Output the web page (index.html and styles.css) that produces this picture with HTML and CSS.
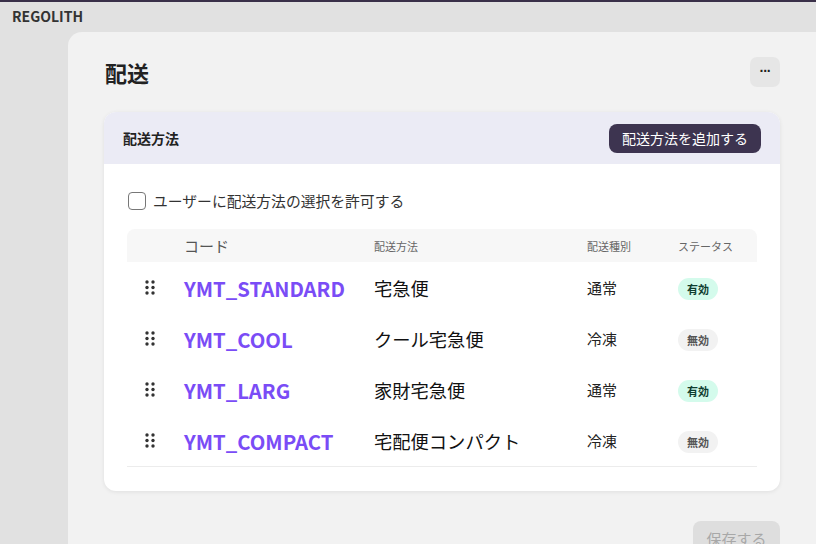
FILE: index.html
```html
<!DOCTYPE html>
<html lang="ja">
<head>
    <meta charset="UTF-8">
    <meta name="viewport" content="width=device-width, initial-scale=1.0">
    <title>配送 - REGOLITH</title>
    <link rel="stylesheet" href="styles.css">
</head>
<body>
    <header class="topbar">REGOLITH</header>

    <div class="layout">
        <aside class="sidebar"></aside>

        <main class="main">
            <div class="page-head">
                <h1>配送</h1>
                <button class="more-btn" type="button">&middot;&middot;&middot;</button>
            </div>

            <section class="card">
                <div class="card-header">
                    <h2>配送方法</h2>
                    <button class="primary-btn" type="button">配送方法を追加する</button>
                </div>

                <div class="card-body">
                    <label class="check">
                        <input type="checkbox">
                        <span>ユーザーに配送方法の選択を許可する</span>
                    </label>

                    <div class="table">
                        <div class="row head">
                            <div></div>
                            <div class="col-code">コード</div>
                            <div>配送方法</div>
                            <div>配送種別</div>
                            <div>ステータス</div>
                        </div>

                        <div class="row">
                            <div class="handle"><svg width="10" height="15" viewBox="0 0 10 15"><circle cx="2" cy="2" r="1.7"/><circle cx="8" cy="2" r="1.7"/><circle cx="2" cy="7.5" r="1.7"/><circle cx="8" cy="7.5" r="1.7"/><circle cx="2" cy="13" r="1.7"/><circle cx="8" cy="13" r="1.7"/></svg></div>
                            <div class="code">YMT_STANDARD</div>
                            <div class="name">宅急便</div>
                            <div class="type">通常</div>
                            <div><span class="badge on">有効</span></div>
                        </div>

                        <div class="row">
                            <div class="handle"><svg width="10" height="15" viewBox="0 0 10 15"><circle cx="2" cy="2" r="1.7"/><circle cx="8" cy="2" r="1.7"/><circle cx="2" cy="7.5" r="1.7"/><circle cx="8" cy="7.5" r="1.7"/><circle cx="2" cy="13" r="1.7"/><circle cx="8" cy="13" r="1.7"/></svg></div>
                            <div class="code">YMT_COOL</div>
                            <div class="name">クール宅急便</div>
                            <div class="type">冷凍</div>
                            <div><span class="badge off">無効</span></div>
                        </div>

                        <div class="row">
                            <div class="handle"><svg width="10" height="15" viewBox="0 0 10 15"><circle cx="2" cy="2" r="1.7"/><circle cx="8" cy="2" r="1.7"/><circle cx="2" cy="7.5" r="1.7"/><circle cx="8" cy="7.5" r="1.7"/><circle cx="2" cy="13" r="1.7"/><circle cx="8" cy="13" r="1.7"/></svg></div>
                            <div class="code">YMT_LARG</div>
                            <div class="name">家財宅急便</div>
                            <div class="type">通常</div>
                            <div><span class="badge on">有効</span></div>
                        </div>

                        <div class="row">
                            <div class="handle"><svg width="10" height="15" viewBox="0 0 10 15"><circle cx="2" cy="2" r="1.7"/><circle cx="8" cy="2" r="1.7"/><circle cx="2" cy="7.5" r="1.7"/><circle cx="8" cy="7.5" r="1.7"/><circle cx="2" cy="13" r="1.7"/><circle cx="8" cy="13" r="1.7"/></svg></div>
                            <div class="code">YMT_COMPACT</div>
                            <div class="name">宅配便コンパクト</div>
                            <div class="type">冷凍</div>
                            <div><span class="badge off">無効</span></div>
                        </div>
                    </div>
                </div>
            </section>

            <div class="actions">
                <button class="save-btn" type="button" disabled>保存する</button>
            </div>
        </main>
    </div>
</body>
</html>
```

FILE: styles.css
```css
body {
    font-family: "Noto Sans CJK JP", "Noto Sans", sans-serif;
    margin: 0;
    padding: 0;
    background-color: #e1e1e1;
    color: #222;
    height: 544px;
    overflow: hidden;
}
.topbar {
    height: 30px;
    border-top: 2px solid #3a3049;
    padding-left: 12px;
    font-size: 14px;
    font-weight: bold;
    line-height: 29px;
    color: #333;
}
.layout {
    display: flex;
    height: 512px;
}
.sidebar {
    width: 68px;
    flex-shrink: 0;
}
.main {
    flex: 1;
    background-color: #f2f2f2;
    border-top-left-radius: 14px;
    padding: 25px 36px 0 36px;
}
.page-head {
    display: flex;
    align-items: center;
    justify-content: space-between;
    height: 30px;
    margin-bottom: 25px;
}
h1 {
    margin: 0;
    padding-left: 1px;
    font-size: 22px;
    font-weight: bold;
    color: #222;
}
.more-btn {
    width: 30px;
    height: 30px;
    border: none;
    border-radius: 7px;
    background-color: #e6e6e6;
    color: #222;
    font-size: 14px;
    font-weight: bold;
    letter-spacing: -1px;
    padding: 0 0 2px 0;
    cursor: pointer;
}
.card {
    background-color: #fff;
    border-radius: 12px;
    box-shadow: 0 1px 4px rgba(0, 0, 0, 0.08);
    overflow: hidden;
}
.card-header {
    display: flex;
    align-items: center;
    justify-content: space-between;
    height: 52px;
    padding: 0 19px;
    background-color: #ebebf5;
}
h2 {
    margin: 0;
    font-size: 14px;
    font-weight: bold;
    color: #222;
}
.primary-btn {
    height: 29px;
    padding: 0 13px;
    border: none;
    border-radius: 8px;
    background-color: #3d3450;
    color: #fff;
    font-family: inherit;
    font-size: 14px;
    cursor: pointer;
}
.card-body {
    padding: 26px 23px 24px 23px;
}
.check {
    display: flex;
    align-items: center;
    gap: 7px;
    margin-left: 1px;
    font-size: 14.8px;
    color: #333;
}
.check input {
    appearance: none;
    width: 18px;
    height: 18px;
    margin: 0;
    border: 1.5px solid #777;
    border-radius: 4px;
    background-color: #fff;
}
.table {
    margin-top: 18px;
    border-bottom: 1px solid #ececec;
}
.row {
    display: grid;
    grid-template-columns: 57px 190px 213px 91px 1fr;
    align-items: center;
    height: 51px;
}
.row.head {
    height: 33px;
    background-color: #f7f7f7;
    border-radius: 8px 8px 0 0;
    font-size: 11px;
    color: #666;
}
.row.head .col-code {
    font-size: 15px;
    color: #555;
}
.handle {
    display: flex;
    padding-left: 18px;
}
.handle svg {
    fill: #333;
}
.code {
    font-size: 20.3px;
    font-weight: bold;
    color: #7a4cf6;
}
.name {
    font-size: 18.3px;
    color: #111;
}
.type {
    font-size: 15px;
    color: #222;
}
.badge {
    display: inline-block;
    padding: 0 9px;
    height: 22px;
    line-height: 22px;
    border-radius: 11px;
    font-size: 11px;
    font-weight: bold;
}
.badge.on {
    background-color: #d4fbec;
    color: #0f3d30;
}
.badge.off {
    background-color: #f2f2f2;
    color: #555;
}
.actions {
    display: flex;
    justify-content: flex-end;
    margin-top: 30px;
}
.save-btn {
    width: 87px;
    height: 34px;
    border: none;
    border-radius: 8px;
    background-color: #dedede;
    color: #a8a8a8;
    font-family: inherit;
    font-size: 15px;
}
```
